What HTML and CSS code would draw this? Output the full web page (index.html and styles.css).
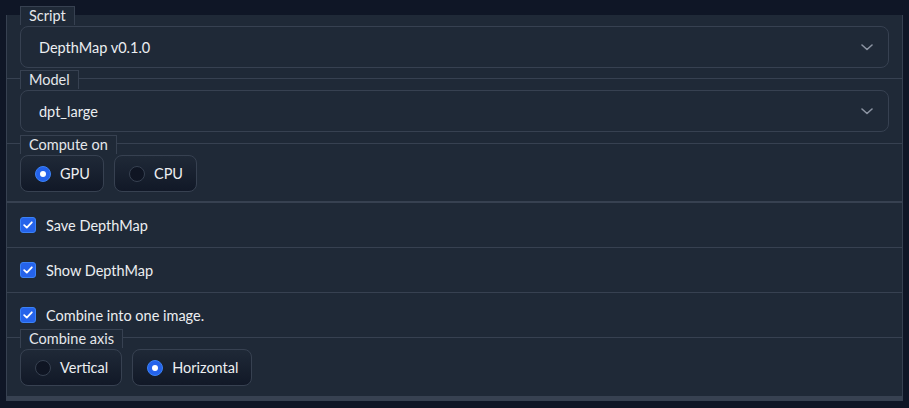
FILE: index.html
```html
<!DOCTYPE html>
<html>
<head>
<meta charset="utf-8">
<link rel="stylesheet" href="styles.css">
</head>
<body>
<div class="panel">
  <div class="block b-first">
    <span class="blabel">Script</span>
    <div class="select">
      <span class="select-text">DepthMap v0.1.0</span>
      <svg class="chev" width="12" height="7" viewBox="0 0 12 7"><path d="M1 1 L6 5.5 L11 1" fill="none" stroke="#8b93a1" stroke-width="1.6" stroke-linecap="round" stroke-linejoin="round"/></svg>
    </div>
  </div>
  <div class="block b-second">
    <span class="blabel">Model</span>
    <div class="select">
      <span class="select-text">dpt_large</span>
      <svg class="chev" width="12" height="7" viewBox="0 0 12 7"><path d="M1 1 L6 5.5 L11 1" fill="none" stroke="#8b93a1" stroke-width="1.6" stroke-linecap="round" stroke-linejoin="round"/></svg>
    </div>
  </div>
  <div class="block b-radio">
    <span class="blabel">Compute on</span>
    <div class="radios">
      <label class="pill"><span class="dot on"></span><span>GPU</span></label>
      <label class="pill"><span class="dot"></span><span>CPU</span></label>
    </div>
  </div>
  <div class="block b-check thick">
    <span class="box"><svg width="10" height="8" viewBox="0 0 10 8"><path d="M1.2 4.2 L3.8 6.6 L8.8 1.3" fill="none" stroke="#fff" stroke-width="1.8" stroke-linecap="round" stroke-linejoin="round"/></svg></span>
    <span>Save DepthMap</span>
  </div>
  <div class="block b-check">
    <span class="box"><svg width="10" height="8" viewBox="0 0 10 8"><path d="M1.2 4.2 L3.8 6.6 L8.8 1.3" fill="none" stroke="#fff" stroke-width="1.8" stroke-linecap="round" stroke-linejoin="round"/></svg></span>
    <span>Show DepthMap</span>
  </div>
  <div class="block b-check">
    <span class="box"><svg width="10" height="8" viewBox="0 0 10 8"><path d="M1.2 4.2 L3.8 6.6 L8.8 1.3" fill="none" stroke="#fff" stroke-width="1.8" stroke-linecap="round" stroke-linejoin="round"/></svg></span>
    <span>Combine into one image.</span>
  </div>
  <div class="block b-radio b-last">
    <span class="blabel">Combine axis</span>
    <div class="radios">
      <label class="pill"><span class="dot"></span><span>Vertical</span></label>
      <label class="pill"><span class="dot on"></span><span>Horizontal</span></label>
    </div>
  </div>
</div>
</body>
</html>
```
FILE: styles.css
```css
html, body {
  margin: 0;
  padding: 0;
}
body {
  background: #0f1626;
  width: 909px;
  height: 408px;
  overflow: hidden;
  font-family: "Lato", "Liberation Sans", sans-serif;
  font-size: 14.5px;
  color: #eceef1;
}
.panel {
  margin: 15px 6px 0 6px;
  background: #1f2937;
  border-left: 1px solid #374151;
  border-right: 1px solid #374151;
  border-bottom: 5px solid #374151;
  display: flex;
  flex-direction: column;
}
.block {
  display: flex;
  flex-direction: column;
  padding: 11px 13px 10px 13px;
  border-top: 1px solid #374151;
}
.b-first {
  border-top: none;
}
.b-second {
  padding-bottom: 11px;
}
.b-radio {
  padding-bottom: 9px;
}
.b-last {
  padding-bottom: 10px;
}
.blabel {
  align-self: flex-start;
  margin-top: -20px;
  height: 18px;
  line-height: 18px;
  padding: 0 8px;
  border: 1px solid #374151;
  border-bottom: none;
  background: #1f2937;
  color: #e5e7eb;
}
.select {
  margin-top: 1px;
  height: 40px;
  border: 1px solid #374151;
  border-radius: 8px;
  background: #1f2937;
  display: flex;
  align-items: center;
  justify-content: space-between;
  padding: 0 15px 0 18px;
}
.chev {
  display: block;
}
.radios {
  margin-top: 1px;
  display: flex;
  gap: 10px;
}
.pill {
  height: 35px;
  display: flex;
  align-items: center;
  gap: 9px;
  padding: 0 13px 0 14px;
  border: 1px solid #374151;
  border-radius: 8px;
  background: linear-gradient(to bottom, #1f2937, #111827);
}
.dot {
  width: 14px;
  height: 14px;
  border-radius: 50%;
  border: 1px solid #374151;
  background: #0f1523;
  display: flex;
  align-items: center;
  justify-content: center;
}
.dot.on {
  background: #2563eb;
  border-color: #3b82f6;
}
.dot.on::after {
  content: "";
  width: 6px;
  height: 6px;
  border-radius: 50%;
  background: #fff;
}
.b-check {
  flex-direction: row;
  align-items: center;
  gap: 10px;
  padding: 0 13px;
  box-sizing: border-box;
  height: 45px;
}
.b-check.thick {
  border-top: 2px solid #374151;
  height: 46px;
}
.box {
  width: 14px;
  height: 14px;
  border: 1px solid #3b82f6;
  border-radius: 3px;
  background: #2563eb;
  display: flex;
  align-items: center;
  justify-content: center;
}
.box svg {
  display: block;
}
```
